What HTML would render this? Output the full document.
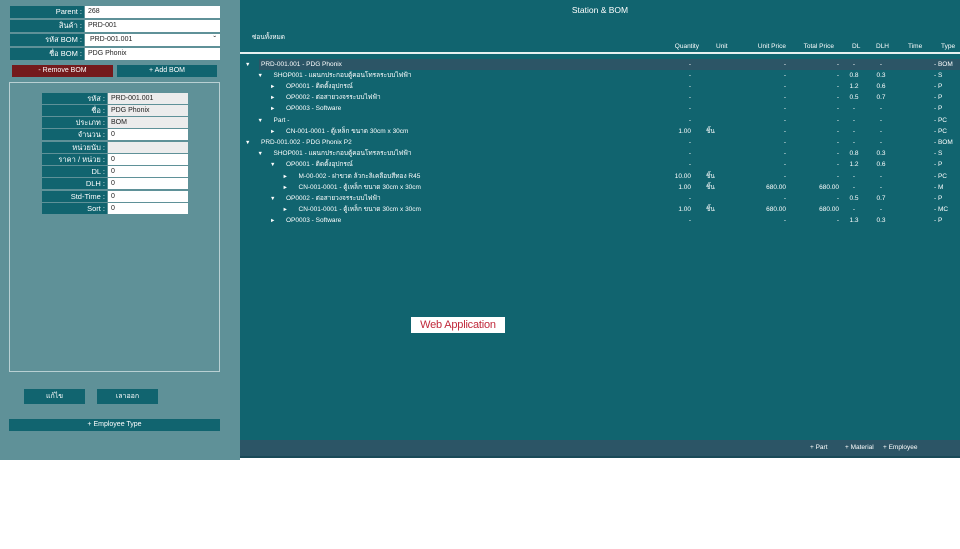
<!DOCTYPE html>
<html><head><meta charset="utf-8"><style>
*{margin:0;padding:0;box-sizing:border-box}
body{width:960px;height:549px;background:#fff;position:relative;overflow:hidden;font-family:"Liberation Sans","Noto Sans CJK SC",sans-serif;font-size:7px;color:#fff}
.a{position:absolute;line-height:8px;white-space:nowrap}
#left{left:0;top:0;width:240px;height:460px;background:#5f9198}
#right{left:240px;top:0;width:720px;height:458px;background:#11646f}
.lab{background:#11646f;text-align:right;padding-right:2px;line-height:12px;font-size:7.5px;overflow:hidden}
.inp{background:#fff;color:#222;padding-left:3px;line-height:12px;font-size:7px;overflow:hidden}
.grey{background:#ececec}
.btn{background:#11646f;text-align:center;font-size:7px;overflow:hidden}
.r{text-align:right}
.c{text-align:center}
</style></head><body>
<div class="a" id="left"></div>
<div class="a lab" style="left:10px;top:6px;width:74px;height:12px">Parent :</div><div class="a inp" style="left:85px;top:6px;width:135px;height:12px">268</div>
<div class="a lab" style="left:10px;top:20px;width:74px;height:12px">สินค้า :</div><div class="a inp" style="left:85px;top:20px;width:135px;height:12px">PRD-001</div>
<div class="a lab" style="left:10px;top:34px;width:74px;height:12px">รหัส BOM :</div><div class="a inp" style="left:85px;top:34px;width:135px;height:12px">&nbsp;PRD-001.001<span style="position:absolute;right:4px;top:0;font-size:8px">&#711;</span></div>
<div class="a lab" style="left:10px;top:48px;width:74px;height:12px">ชื่อ BOM :</div><div class="a inp" style="left:85px;top:48px;width:135px;height:12px">PDG Phonix</div>
<div class="a btn" style="left:12px;top:65px;width:101px;height:12px;line-height:12px;background:#741a1c">- Remove BOM</div>
<div class="a btn" style="left:117px;top:65px;width:100px;height:12px;line-height:12px">+ Add BOM</div>
<div class="a" style="left:9px;top:82px;width:211px;height:290px;border:1px solid #b9d0d3"></div>
<div class="a lab" style="left:42px;top:93px;width:65px;height:11px;line-height:11px">รหัส :</div><div class="a inp grey" style="left:108px;top:93px;width:80px;height:11px;line-height:11px">PRD-001.001</div>
<div class="a lab" style="left:42px;top:105px;width:65px;height:11px;line-height:11px">ชื่อ :</div><div class="a inp grey" style="left:108px;top:105px;width:80px;height:11px;line-height:11px">PDG Phonix</div>
<div class="a lab" style="left:42px;top:117px;width:65px;height:11px;line-height:11px">ประเภท :</div><div class="a inp grey" style="left:108px;top:117px;width:80px;height:11px;line-height:11px">BOM</div>
<div class="a lab" style="left:42px;top:129px;width:65px;height:11px;line-height:11px">จำนวน :</div><div class="a inp" style="left:108px;top:129px;width:80px;height:11px;line-height:11px">0</div>
<div class="a lab" style="left:42px;top:142px;width:65px;height:11px;line-height:11px">หน่วยนับ :</div><div class="a inp grey" style="left:108px;top:142px;width:80px;height:11px;line-height:11px"></div>
<div class="a lab" style="left:42px;top:154px;width:65px;height:11px;line-height:11px">ราคา / หน่วย :</div><div class="a inp" style="left:108px;top:154px;width:80px;height:11px;line-height:11px">0</div>
<div class="a lab" style="left:42px;top:166px;width:65px;height:11px;line-height:11px">DL :</div><div class="a inp" style="left:108px;top:166px;width:80px;height:11px;line-height:11px">0</div>
<div class="a lab" style="left:42px;top:178px;width:65px;height:11px;line-height:11px">DLH :</div><div class="a inp" style="left:108px;top:178px;width:80px;height:11px;line-height:11px">0</div>
<div class="a lab" style="left:42px;top:191px;width:65px;height:11px;line-height:11px">Std-Time :</div><div class="a inp" style="left:108px;top:191px;width:80px;height:11px;line-height:11px">0</div>
<div class="a lab" style="left:42px;top:203px;width:65px;height:11px;line-height:11px">Sort :</div><div class="a inp" style="left:108px;top:203px;width:80px;height:11px;line-height:11px">0</div>
<div class="a btn" style="left:24px;top:389px;width:61px;height:15px;line-height:15px">แก้ไข</div>
<div class="a btn" style="left:97px;top:389px;width:61px;height:15px;line-height:15px">เลาออก</div>
<div class="a btn" style="left:9px;top:419px;width:211px;height:12px;line-height:12px">+ Employee Type</div>

<div class="a" id="right"></div>
<div class="a" style="left:240px;top:5px;width:720px;text-align:center;font-size:8.5px;line-height:10px">Station &amp; BOM</div>
<div class="a" style="left:252px;top:34px;font-size:6.5px">ซ่อนทั้งหมด</div>
<div class="a" style="left:240px;top:52px;width:720px;height:1.5px;background:#e6f0f0"></div>
<div class="a" style="left:240px;top:43px;width:720px;height:8px;font-size:6.5px">
<span class="a r" style="left:400px;width:59px">Quantity</span>
<span class="a" style="left:476px">Unit</span>
<span class="a r" style="left:480px;width:66px">Unit Price</span>
<span class="a r" style="left:540px;width:54px">Total Price</span>
<span class="a" style="left:612px">DL</span>
<span class="a" style="left:636px">DLH</span>
<span class="a" style="left:668px">Time</span>
<span class="a" style="left:701px">Type</span>
</div>
<div class="a" style="left:259px;top:59px;width:701px;height:11px;background:#2c5566"></div>
<div id="rows"></div>
<div class="a" style="left:411px;top:317px;width:94px;height:16px;background:#fff;color:#c0283a;font-size:11px;line-height:16px;text-align:center;letter-spacing:-0.2px">Web Application</div>
<div class="a" style="left:240px;top:440px;width:720px;height:16px;background:#2c5566;font-size:6.5px;line-height:16px">
<span class="a" style="left:570px;line-height:16px">+ Part</span><span class="a" style="left:605px;line-height:16px">+ Material</span><span class="a" style="left:643px;line-height:16px">+ Employee</span></div>
<div class="a" style="left:240px;top:456px;width:720px;height:2px;background:#1a4a58"></div>
<script>
var R=[
[0,'▼','PRD-001.001 - PDG Phonix','-','','-','-','-','-','BOM'],
[1,'▼','SHOP001 - แผนกประกอบตู้คอนโทรลระบบไฟฟ้า','-','','-','-','0.8','0.3','S'],
[2,'►','OP0001 - ติดตั้งอุปกรณ์','-','','-','-','1.2','0.6','P'],
[2,'►','OP0002 - ต่อสายวงจรระบบไฟฟ้า','-','','-','-','0.5','0.7','P'],
[2,'►','OP0003 - Software','-','','-','-','-','-','P'],
[1,'▼','Part -','-','','-','-','-','-','PC'],
[2,'►','CN-001-0001 - ตู้เหล็ก ขนาด 30cm x 30cm','1.00','ชิ้น','-','-','-','-','PC'],
[0,'▼','PRD-001.002 - PDG Phonix P2','-','','-','-','-','-','BOM'],
[1,'▼','SHOP001 - แผนกประกอบตู้คอนโทรลระบบไฟฟ้า','-','','-','-','0.8','0.3','S'],
[2,'▼','OP0001 - ติดตั้งอุปกรณ์','-','','-','-','1.2','0.6','P'],
[3,'►','M-00-002 - ฝาขวด ล้วกะลิเคลือบสีทอง R45','10.00','ชิ้น','-','-','-','-','PC'],
[3,'►','CN-001-0001 - ตู้เหล็ก ขนาด 30cm x 30cm','1.00','ชิ้น','680.00','680.00','-','-','M'],
[2,'▼','OP0002 - ต่อสายวงจรระบบไฟฟ้า','-','','-','-','0.5','0.7','P'],
[3,'►','CN-001-0001 - ตู้เหล็ก ขนาด 30cm x 30cm','1.00','ชิ้น','680.00','680.00','-','-','MC'],
[2,'►','OP0003 - Software','-','','-','-','1.3','0.3','P']];
var h='';
R.forEach(function(r,i){var y=60.5+i*11.2;var x=245+r[0]*12.5;
var s='top:'+y+'px;height:8px;line-height:8px;font-size:6.5px;';
h+='<div class="a" style="left:'+x+'px;'+s+'font-size:5.5px">'+r[1]+'</div>';
h+='<div class="a" style="left:'+(x+16)+'px;'+s+'">'+r[2]+'</div>';
h+='<div class="a r" style="left:640px;width:51px;'+s+'">'+r[3]+'</div>';
h+='<div class="a" style="left:706px;'+s+'">'+r[4]+'</div>';
h+='<div class="a r" style="left:720px;width:66px;'+s+'">'+r[5]+'</div>';
h+='<div class="a r" style="left:780px;width:59px;'+s+'">'+r[6]+'</div>';
h+='<div class="a c" style="left:844px;width:20px;'+s+'">'+r[7]+'</div>';
h+='<div class="a c" style="left:871px;width:20px;'+s+'">'+r[8]+'</div>';
h+='<div class="a" style="left:934px;'+s+'">- '+r[9]+'</div>';});
document.getElementById('rows').innerHTML=h;
</script>
</body></html>
